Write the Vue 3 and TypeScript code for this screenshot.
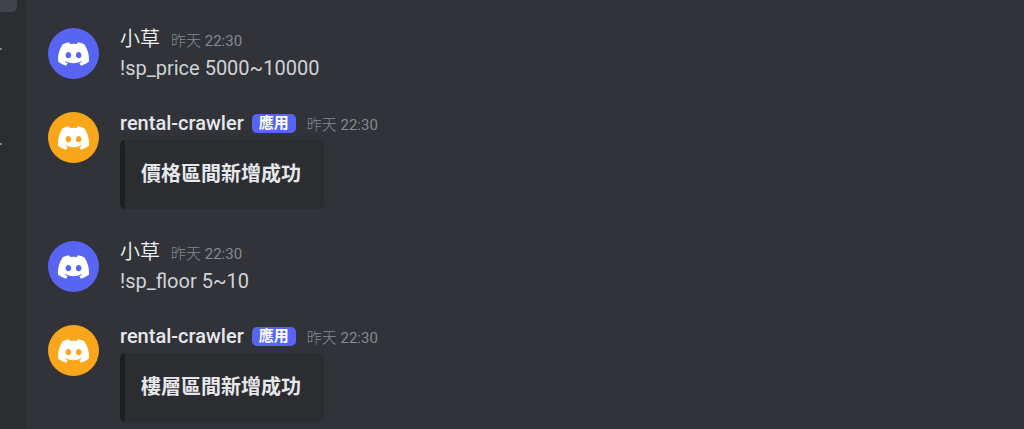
<script setup lang="ts">
interface Message {
  id: number
  author: string
  bot: boolean
  day: string
  clock: string
  text: string
}

const messages: Message[] = [
  { id: 1, author: '小草', bot: false, day: '昨天', clock: '22:30', text: '!sp_price 5000~10000' },
  { id: 2, author: 'rental-crawler', bot: true, day: '昨天', clock: '22:30', text: '價格區間新增成功' },
  { id: 3, author: '小草', bot: false, day: '昨天', clock: '22:30', text: '!sp_floor 5~10' },
  { id: 4, author: 'rental-crawler', bot: true, day: '昨天', clock: '22:30', text: '樓層區間新增成功' },
]
</script>

<template>
  <div class="app">
    <aside class="sidebar">
      <div class="channel"></div>
      <div class="mark first"></div>
      <div class="mark second"></div>
    </aside>
    <main class="chat">
      <article v-for="m in messages" :key="m.id" class="message">
        <div class="avatar" :class="{ bot: m.bot }">
          <svg class="logo" viewBox="0 0 127.14 96.36" aria-hidden="true">
            <path
              fill="#fff"
              d="M107.7,8.07A105.15,105.15,0,0,0,81.47,0a72.06,72.06,0,0,0-3.36,6.83A97.68,97.68,0,0,0,49,6.83,72.37,72.37,0,0,0,45.64,0,105.89,105.89,0,0,0,19.39,8.09C2.79,32.65-1.71,56.6.54,80.21h0A105.73,105.73,0,0,0,32.71,96.36,77.7,77.7,0,0,0,39.6,85.25a68.42,68.42,0,0,1-10.85-5.18c.91-.66,1.8-1.34,2.66-2a75.57,75.57,0,0,0,64.32,0c.87.71,1.76,1.39,2.66,2a68.68,68.68,0,0,1-10.87,5.19,77,77,0,0,0,6.89,11.1A105.25,105.25,0,0,0,126.6,80.22h0C129.24,52.84,122.09,29.11,107.7,8.07ZM42.45,65.69C36.18,65.69,31,60,31,53s5-12.74,11.43-12.74S54,46,53.89,53,48.84,65.69,42.45,65.69Zm42.24,0C78.41,65.69,73.25,60,73.25,53s5-12.74,11.44-12.74S96.23,46,96.12,53,91.08,65.69,84.69,65.69Z"
            />
          </svg>
        </div>
        <div class="body">
          <header class="header">
            <span class="author" :class="{ strong: m.bot }">{{ m.author }}</span>
            <span v-if="m.bot" class="tag">應用</span>
            <time class="time"><span class="day">{{ m.day }}</span> {{ m.clock }}</time>
          </header>
          <div v-if="m.bot" class="embed">{{ m.text }}</div>
          <p v-else class="text">{{ m.text }}</p>
        </div>
      </article>
    </main>
  </div>
</template>

<style>
body {
  margin: 0;
  background: #313338;
}
</style>

<style scoped>
.app {
  box-sizing: border-box;
  display: flex;
  min-height: 100vh;
  background: #313338;
  border-bottom: 1px solid #29232b;
  font-family: Roboto, "Noto Sans CJK TC", sans-serif;
  font-size: 20px;
  line-height: 28px;
  color: #d0d3d7;
}
.sidebar {
  flex: none;
  width: 27px;
  background: #2b2d31;
}
.channel {
  width: 17px;
  height: 12px;
  background: #404249;
  border-radius: 0 0 5px 0;
}
.mark {
  width: 2px;
  height: 2px;
  background: #868a91;
  border-radius: 0 1px 1px 0;
}
.first {
  margin-top: 36px;
}
.second {
  margin-top: 93px;
}
.chat {
  flex: 1;
  min-width: 0;
  padding: 26px 21px 6px;
  display: flex;
  flex-direction: column;
  gap: 28px;
}
.message {
  display: flex;
  gap: 21px;
}
.avatar {
  flex: none;
  display: flex;
  align-items: center;
  justify-content: center;
  width: 51px;
  height: 51px;
  margin-top: 2px;
  border-radius: 50%;
  background: #5865f2;
}
.avatar.bot {
  background: #faa61a;
}
.logo {
  width: 31px;
  height: 24px;
}
.body {
  min-width: 0;
}
.header {
  display: flex;
  align-items: center;
  height: 26px;
  padding-bottom: 2px;
}
.author {
  color: #f2f3f5;
  font-weight: 350;
}
.strong {
  color: #e6e8eb;
  font-weight: 500;
}
.tag {
  margin-left: 8px;
  padding: 0 7px;
  border-radius: 5px;
  background: #5865f2;
  color: #fff;
  font-size: 15px;
  font-weight: 700;
  line-height: 19px;
}
.time {
  margin-left: 11px;
  padding-top: 4px;
  color: #858a92;
  font-size: 15px;
  line-height: 22px;
}
.day {
  font-weight: 300;
}
.text {
  margin: 0;
}
.embed {
  margin: 2px 0;
  padding: 20px 23px 21px 16px;
  border-left: 5px solid #1e1f22;
  border-radius: 5px;
  background: #2b2d31;
  color: #e6e8eb;
  font-weight: 700;
  width: fit-content;
}
</style>
